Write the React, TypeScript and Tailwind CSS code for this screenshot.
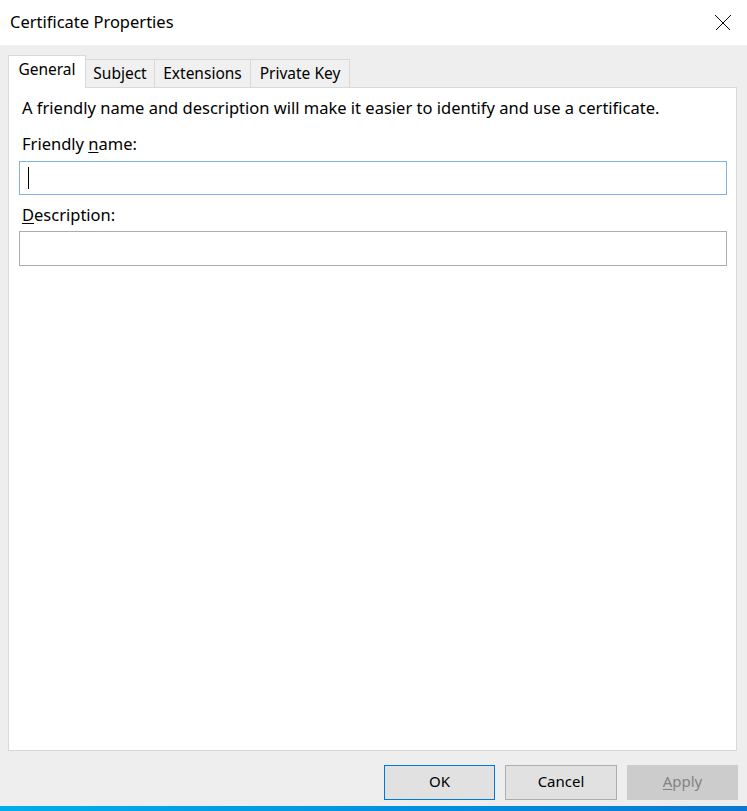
import { useState } from 'react';

const tabs = [
  { name: 'General', w: 'w-[78px]' },
  { name: 'Subject', w: 'w-[69px]' },
  { name: 'Extensions', w: 'w-[96px]' },
  { name: 'Private Key', w: 'w-[99px]' },
];

function CloseGlyph() {
  return (
    <svg width="16" height="16" viewBox="0 0 16 16" className="block">
      <path d="M0.5 0.5 L15.5 15.5 M15.5 0.5 L0.5 15.5" stroke="#000" strokeWidth="1" shapeRendering="crispEdges" />
    </svg>
  );
}

export default function App() {
  const [active, setActive] = useState('General');
  const [friendly, setFriendly] = useState('');
  const [desc, setDesc] = useState('');

  return (
    <div className="w-[747px] h-[811px] flex flex-col bg-[#eeeeee] text-[#000] font-['Noto_Sans',sans-serif] overflow-hidden">
      {/* title bar */}
      <div className="h-[45px] bg-white flex items-center justify-between pl-[10px] pr-[16px] shrink-0">
        <span className="text-[16.5px] leading-none">Certificate Properties</span>
        <CloseGlyph />
      </div>

      {/* tab strip + page */}
      <div className="flex-1 flex flex-col px-[8px] pt-[10px] pr-[10px]">
        <div className="flex items-end h-[32px]">
          {tabs.map(t => (
            <button
              key={t.name}
              onClick={() => setActive(t.name)}
              className={
                t.name === active
                  ? `${t.w} relative z-10 -mb-px h-[33px] bg-white border border-b-0 border-[#d9d9d9] text-[15.5px] leading-none pb-[4px]`
                  : `${t.w} h-[28px] bg-[#f0f0f0] border border-l-0 border-b-0 border-[#d9d9d9] text-[15.5px] leading-none`
              }
            >
              {t.name}
            </button>
          ))}
        </div>

        <div className="h-[664px] bg-white border border-[#d9d9d9] pl-[10px] pr-[9px] pt-[10px]">
          <p className="text-[16.5px] leading-[20px] pl-[3px]">
            A friendly name and description will make it easier to identify and use a certificate.
          </p>
          <label className="block text-[16.5px] leading-[20px] pl-[3px] mt-[16px]">
            Friendly <span className="underline underline-offset-2">n</span>ame:
          </label>
          <div className="mt-[7px] h-[34px] border border-[#7eb4ea] flex items-center px-[8px]">
            {friendly === '' && <span className="w-px h-[22px] bg-black shrink-0" />}
            <input
              value={friendly}
              onChange={e => setFriendly(e.target.value)}
              className="w-full text-[16.5px] outline-none"
            />
          </div>
          <label className="block text-[16.5px] leading-[20px] pl-[3px] mt-[10px]">
            <span className="underline underline-offset-2">D</span>escription:
          </label>
          <div className="mt-[6px] h-[35px] border border-[#acacac] flex items-center px-[8px]">
            <input
              value={desc}
              onChange={e => setDesc(e.target.value)}
              className="w-full text-[16.5px] outline-none"
            />
          </div>
        </div>

        {/* dialog buttons */}
        <div className="flex justify-end gap-[10px] mt-[14px] -mr-[1px]">
          <button className="w-[111px] h-[35px] bg-[#e1e1e1] border border-[#0078d7] text-[15px] pb-[2px]">OK</button>
          <button className="w-[112px] h-[35px] bg-[#e1e1e1] border border-[#adadad] text-[15px] pb-[2px]">Cancel</button>
          <button disabled className="w-[111px] h-[35px] bg-[#cccccc] border border-[#cccccc] text-[15px] text-[#838383] pb-[2px]">
            <span className="underline underline-offset-2">A</span>pply
          </button>
        </div>
      </div>

      <div className="h-[5px] shrink-0 bg-gradient-to-r from-[#00aeef] to-[#0a78d4]" />
    </div>
  );
}
